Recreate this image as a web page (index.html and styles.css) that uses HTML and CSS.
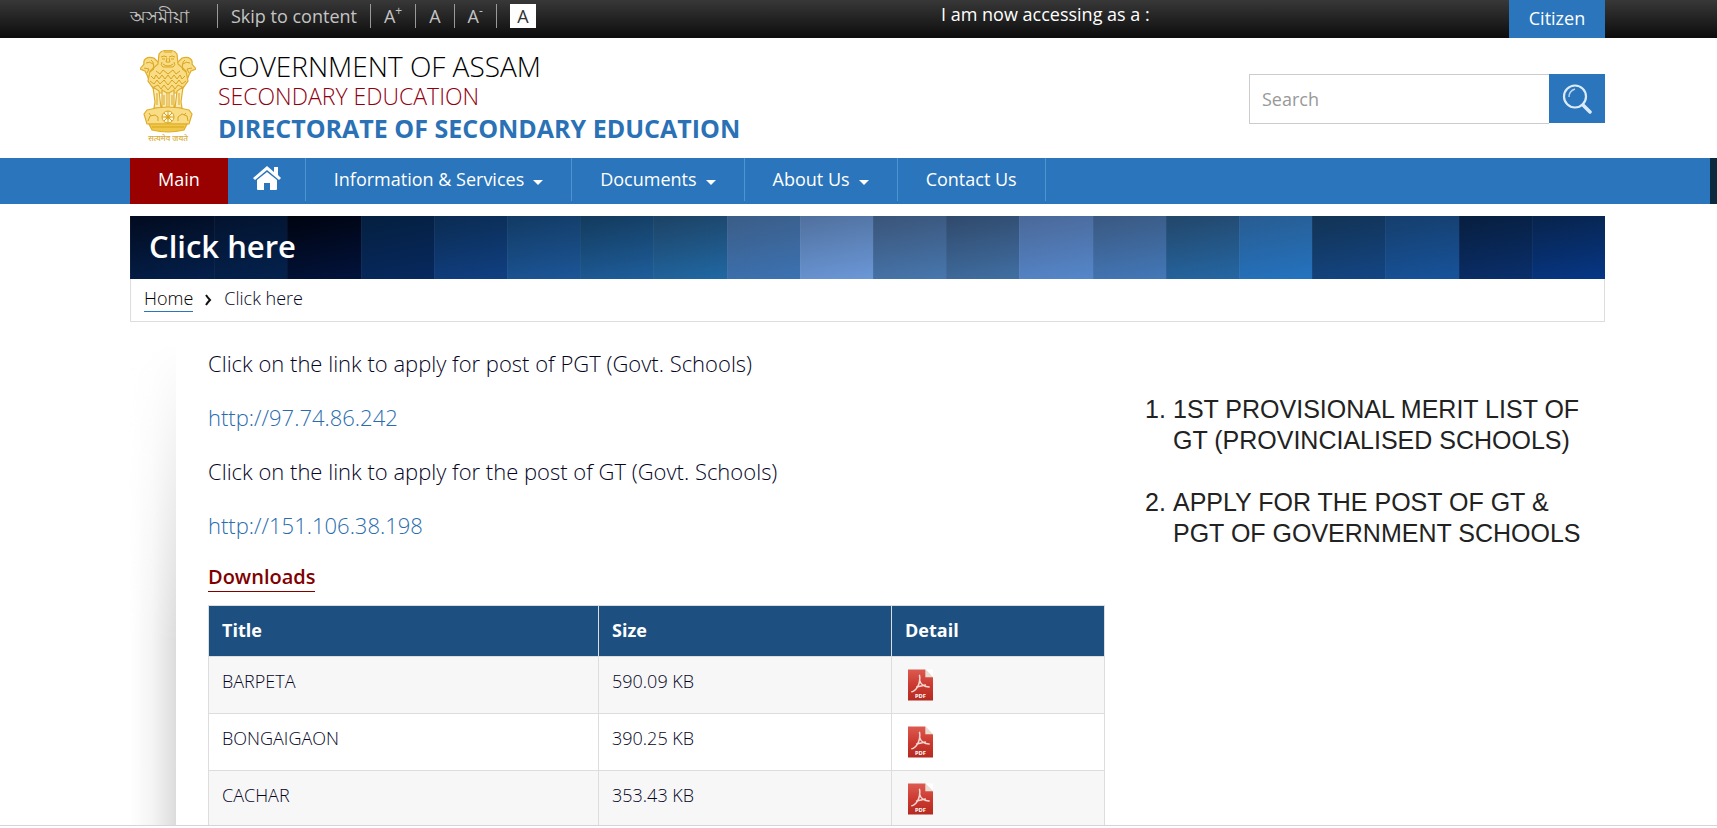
FILE: index.html
```html
<!DOCTYPE html>
<html lang="en">
<head>
<meta charset="utf-8">
<meta name="viewport" content="width=device-width, initial-scale=1">
<title>Click here | Directorate of Secondary Education</title>
<link rel="stylesheet" href="styles.css">
</head>
<body>
<svg class="sprite" aria-hidden="true">
  <defs>
    <linearGradient id="pdf-red" x1="0" y1="0" x2="0" y2="1">
      <stop offset="0" stop-color="#dc5a50"/><stop offset=".5" stop-color="#cb3a30"/><stop offset="1" stop-color="#b52a20"/>
    </linearGradient>
    <symbol id="pdf" viewBox="0 0 26 32">
      <path fill="url(#pdf-red)" d="M0 0h18l8 8v24H0z"/>
      <path fill="#fff" d="M18 0h8v8z"/><path fill="#e9ddd2" d="M18 0v8h8z"/>
      <path fill="none" stroke="#f7d9d5" stroke-width="1.6" stroke-linecap="round" stroke-linejoin="round" d="M12 6c1 5 0 8-2 12-2 3-4 5-6 5M12 11c1 4 5 7 10 7M9 18l9-2"/>
      <text x="13" y="30" text-anchor="middle" class="pdf-label">PDF</text>
    </symbol>
  </defs>
</svg>
<div class="page">
  <div class="topbar">
    <div class="shell topbar-row">
      <ul class="tools">
        <li class="lang"><a href="#" lang="as">অসমীয়া</a></li>
        <li><a href="#content">Skip to content</a></li>
        <li><button type="button">A<sup>+</sup></button></li>
        <li><button type="button">A</button></li>
        <li><button type="button">A<sup>-</sup></button></li>
        <li><button type="button" class="contrast">A</button></li>
      </ul>
      <div class="access">
        <span>I am now accessing as a :</span>
        <a class="citizen" href="#">Citizen</a>
      </div>
    </div>
  </div>

  <header class="shell masthead">
    <svg class="emblem" viewBox="0 0 56 94" role="img" aria-label="State emblem">
      <g fill="#f8dd86" stroke="#e0ad2a" stroke-width="1.200">
        <path d="M14 8C6 6 3 10 4 14L0 19l5 2 2 4 2 5 9 2 4-16zM42 8c8-2 11 2 10 6l4 5-5 2-2 4-2 5-9 2-4-16z"/>
        <path d="M19 4C22-1 34-1 37 4l1 10 8 7 2 10-5 7-6 5H19l-6-5-5-7 2-10 8-7z"/>
        <path d="M13 37l6 4 2 17h-7l1-6zM22 40l5 3v15h-5zM29 43l5-3v18h-5zM43 37l-6 4-2 17h7l-1-6z" fill="#fbeab2"/>
        <path d="M7 60q21-6 42 0l3 4-3 10H7L4 64z"/>
        <path d="M9 74h38l-3 6q-16 4-32 0z" fill="#efc84a"/>
      </g>
      <g fill="none" stroke="#d9a31c" stroke-width="1">
        <path d="M21 7q3-2 6 0m2 0q3-2 6 0M22 9h3m6 0h3M27 8l-1 4h4l-1-4M23 14q5 4 10 0M22 12q-2 3 1 5h10q3-2 1-5M24 2h8"/>
        <path d="M6 13q4-2 7 1M50 13q-4-2-7 1M4 18l5 1-2 4M52 18l-5 1 2 4M11 10q4 3 2 9M45 10q-4 3-2 9M10 22l4-3M46 22l-4-3"/>
        <path d="M11 26l3 3 2-4 3 4 3-4 3 4 3-4 3 4 3-4 3 4 3-4 2 4 3-3M10 31l4 3 3-4 3 4 4-4 4 5 4-5 4 4 3-4 3 4 4-3M14 37l4-2 3 4 3-4 4 5 4-5 3 4 3-4 4 2M16 21l4 3 3-4 5 4 5-4 3 4 4-3"/>
        <path d="M17 43v12M24 45v10M32 45v10M39 43v12"/>
        <circle cx="28" cy="67" r="6" fill="#fff6d8"/><circle cx="28" cy="67" r="2"/>
        <path d="M28 61v12M22 67h12M24 63l8 8M32 63l-8 8M8 71l2-5 5-1 3 2v4M11 66l-2-3M38 71v-4l4-3 5 2 1 5M44 65l2-2M12 77h32"/>
      </g>
      <text x="28" y="91" text-anchor="middle" class="motto">सत्यमेव जयते</text>
    </svg>
    <div class="titles">
      <p class="gov">GOVERNMENT OF ASSAM</p>
      <p class="dept">SECONDARY EDUCATION</p>
      <p class="dir">DIRECTORATE OF SECONDARY EDUCATION</p>
    </div>
    <form class="search" role="search">
      <input type="text" placeholder="Search" aria-label="Search">
      <button type="button" aria-label="Submit search">
        <svg viewBox="0 0 30 30"><circle cx="13" cy="12.500" r="11" fill="none" stroke="#dcebf9" stroke-width="2.200"/><path d="M7 13q0-6 6-8" fill="none" stroke="#b9d6f0" stroke-width="1.500"/><path d="M21 21l7 7" stroke="#dcebf9" stroke-width="3.500" stroke-linecap="round"/></svg>
      </button>
    </form>
  </header>

  <nav class="nav">
    <ul class="shell menu">
      <li class="main"><a href="#">Main</a></li>
      <li class="home"><a href="#" aria-label="Home"><svg viewBox="0 0 28 24"><path fill="#fff" d="M14 0l7 6V1h4v8l3 3-2 2L14 4 2 14l-2-2z"/><path fill="#fff" d="M14 6l10 8v9q0 1-1 1h-6v-7h-6v7H5q-1 0-1-1v-9z"/></svg></a></li>
      <li><a href="#">Information &amp; Services<i class="caret"></i></a></li>
      <li><a href="#">Documents<i class="caret"></i></a></li>
      <li><a href="#">About Us<i class="caret"></i></a></li>
      <li><a href="#">Contact Us</a></li>
    </ul>
  </nav>

  <div class="shell intro">
    <div class="banner">
      <div class="stripes" aria-hidden="true"><i class="s1"></i><i class="s2"></i><i class="s3"></i><i class="s4"></i><i class="s5"></i><i class="s6"></i><i class="s7"></i><i class="s8"></i><i class="s9"></i><i class="s10"></i><i class="s11"></i><i class="s12"></i><i class="s13"></i><i class="s14"></i><i class="s15"></i><i class="s16"></i><i class="s17"></i><i class="s18"></i><i class="s19"></i><i class="s20"></i></div>
      <h1>Click here</h1>
    </div>
    <div class="crumbs">
      <a href="#">Home</a>
      <svg viewBox="0 0 7 12" aria-hidden="true"><path d="M1 1q2 3 4 5-2 2-4 5" fill="none" stroke="#111" stroke-width="2"/></svg>
      <span>Click here</span>
    </div>
  </div>

  <main class="shell body" id="content">
    <div class="shade"></div>
    <article class="article">
      <p>Click on the link to apply for post of PGT (Govt. Schools)</p>
      <p><a href="#">http://97.74.86.242</a></p>
      <p>Click on the link to apply for the post of GT (Govt. Schools)</p>
      <p><a href="#">http://151.106.38.198</a></p>
      <h2>Downloads</h2>
      <table>
        <thead><tr><th class="c-title">Title</th><th class="c-size">Size</th><th>Detail</th></tr></thead>
        <tbody>
          <tr><td>BARPETA</td><td>590.09 KB</td><td><a href="#" aria-label="Barpeta PDF"><svg class="pdf"><use href="#pdf"/></svg></a></td></tr>
          <tr><td>BONGAIGAON</td><td>390.25 KB</td><td><a href="#" aria-label="Bongaigaon PDF"><svg class="pdf"><use href="#pdf"/></svg></a></td></tr>
          <tr><td>CACHAR</td><td>353.43 KB</td><td><a href="#" aria-label="Cachar PDF"><svg class="pdf"><use href="#pdf"/></svg></a></td></tr>
        </tbody>
      </table>
    </article>
    <aside class="notice">
      <ol>
        <li>1ST PROVISIONAL MERIT LIST OF<br>GT (PROVINCIALISED SCHOOLS)</li>
        <li>APPLY FOR THE POST OF GT &amp;<br>PGT OF GOVERNMENT SCHOOLS</li>
      </ol>
    </aside>
  </main>
</div>
</body>
</html>
```

FILE: styles.css
```css
* { box-sizing: border-box; }
body { margin: 0; background: #fff; color: #05051f; font-family: "Open Sans", "Noto Sans", sans-serif; font-size: 18px; line-height: 24px; }
p, h1, h2, ul, ol { margin: 0; padding: 0; }
ul, ol { list-style: none; }
a { color: inherit; text-decoration: none; }
button { font: inherit; color: inherit; background: none; border: 0; padding: 0; cursor: pointer; }
.sprite { position: absolute; width: 0; height: 0; }
.page { display: flex; flex-direction: column; height: calc(100vh - 2px); overflow: hidden; border-bottom: 1px solid #d5d5d5; }
.shell { padding-left: 130px; padding-right: 112px; }

.topbar { flex: none; background: linear-gradient(#383838, #0c0c0c); color: #c4c4c4; }
.topbar-row { display: flex; justify-content: space-between; height: 38px; }
.tools { display: flex; padding-top: 4px; }
.tools li { height: 24px; padding: 0 13px; border-left: 1px solid #999; }
.tools .lang { padding: 0 28px 0 0; border: 0; }
.tools a, .tools button { display: block; line-height: 25px; }
.tools sup { font-size: 12px; line-height: 0; vertical-align: 8px; }
.tools .contrast { width: 26px; line-height: 24px; background: #fff; color: #333; }
.access { display: flex; justify-content: space-between; flex: 0 1 664px; color: #fff; line-height: 29px; }
.citizen { width: 96px; line-height: 36px; text-align: center; background: #2a75bb; }

.masthead { flex: none; display: flex; align-items: flex-start; height: 120px; }
.emblem { width: 56px; height: 94px; margin: 12px 22px 0 10px; }
.motto { font: 500 8px "Noto Sans", sans-serif; fill: #d8ad3c; }
.titles { padding-top: 12px; }
.gov { font-size: 28px; line-height: 32px; font-weight: 300; color: #000; }
.dept { font-size: 23px; line-height: 29px; font-weight: 300; color: #8f0010; }
.dir { font-size: 25px; line-height: 35px; font-weight: 700; color: #2a72b5; }
.search { display: flex; margin: 36px 0 0 auto; width: 356px; height: 50px; }
.search input { flex: 1; min-width: 0; border: 1px solid #ccc; border-right: 0; padding: 0 12px; font: inherit; }
.search input::placeholder { color: #999; }
.search button { width: 56px; height: 49px; background: #2a75bb; }
.search svg { display: block; width: 30px; height: 30px; margin: auto; }

.nav { flex: none; background: #2a75bb; color: #fff; border-right: 7px solid #0b2a3d; }
.menu { display: flex; height: 46px; line-height: 42px; }
.menu li { height: 43px; padding: 0 28px; border-right: 1px solid #4f94d2; }
.menu .main { height: 46px; border: 0; background: #900; }
.menu .home { padding: 0 24px 0 25px; }
.home svg { display: block; width: 28px; height: 24px; margin-top: 8px; }
.caret { display: inline-block; margin-left: 9px; border: 5px solid transparent; border-top-color: #fff; border-bottom: 0; vertical-align: 1px; }

.intro { flex: none; padding-top: 12px; }
.banner { display: grid; height: 63px; }
.banner > * { grid-area: 1 / 1; }
.banner h1 { padding-left: 19px; color: #fff; font-size: 31px; font-weight: 600; line-height: 61px; }
.stripes { display: flex; }
.stripes i { flex: 1; background: linear-gradient(170deg, var(--a), var(--b)); box-shadow: inset 1px 0 rgba(255, 255, 255, .04); }
.stripes .s1 { flex: 1.15; --a: #020b1f; --b: #04204c; }
.s2 { --a: #03132e; --b: #04224e; }
.s3 { --a: #000410; --b: #02133c; }
.s4 { --a: #041f3f; --b: #07295f; }
.s5 { --a: #0b2c52; --b: #103f82; }
.s6 { --a: #123a63; --b: #1c5698; }
.s7 { --a: #133a5c; --b: #1e5e9c; }
.s8 { --a: #1d4264; --b: #2068a4; }
.s9 { --a: #3b5d87; --b: #3c72b2; }
.s10 { --a: #50709e; --b: #6b98d8; }
.s11 { --a: #3a5478; --b: #4777ae; }
.s12 { --a: #30496b; --b: #406fa3; }
.s13 { --a: #4a6898; --b: #5587cb; }
.s14 { --a: #3a5880; --b: #4378b9; }
.s15 { --a: #234669; --b: #2467a4; }
.s16 { --a: #285c91; --b: #2473c0; }
.s17 { --a: #123354; --b: #134584; }
.s18 { --a: #153e6c; --b: #17539b; }
.s19 { --a: #071e3e; --b: #0a2f6c; }
.s20 { --a: #08234b; --b: #063786; }
.crumbs { display: flex; align-items: flex-start; gap: 12px; height: 43px; padding: 7px 13px; border: 1px solid #ddd; border-top: 0; font-weight: 300; }
.crumbs a { padding-bottom: 1px; border-bottom: 1px solid #2a75bb; color: #000; }
.crumbs svg { width: 7px; height: 12px; margin-top: 8px; }

.body { flex: 1; min-height: 0; display: flex; align-items: stretch; }
.shade { flex: none; width: 46px; margin-top: 20px; background: linear-gradient(90deg, transparent, #f4f4f4 50%, #dcdcdc); mask-image: linear-gradient(transparent, #000 300px); }
.article { flex: 1; padding: 26px 0 0 32px; }
.article p { margin-bottom: 24px; font-size: 22px; line-height: 30px; font-weight: 300; }
.article p a { color: #2a6cae; }
.article h2 { width: fit-content; margin-top: -2px; border-bottom: 1px solid #800000; color: #800000; font-size: 20px; font-weight: 600; line-height: 29px; }
table { width: 100%; margin-top: 13px; border-collapse: collapse; }
th, td { height: 57px; padding: 12px 13px; border: 1px solid #ddd; text-align: left; vertical-align: top; font-weight: 300; }
th { height: 51px; background: #1d5080; color: #fff; font-weight: 700; }
tbody tr:nth-child(odd) { background: #f7f7f7; }
.c-title { width: 390px; }
.c-size { width: 293px; }
.pdf { display: block; width: 25px; height: 32px; margin-left: 3px; }
.pdf-label { font: 700 6px "Open Sans", sans-serif; fill: #fff; }

.notice { flex: 0 0 500px; padding: 72px 0 0 40px; color: #222; font: 25px/31px "Liberation Sans", Arial, sans-serif; white-space: nowrap; }
.notice ol { counter-reset: n; }
.notice li { margin-bottom: 31px; padding-left: 28px; text-indent: -28px; counter-increment: n; }
.notice li::before { content: counter(n) "."; display: inline-block; width: 28px; text-indent: 0; }
```
